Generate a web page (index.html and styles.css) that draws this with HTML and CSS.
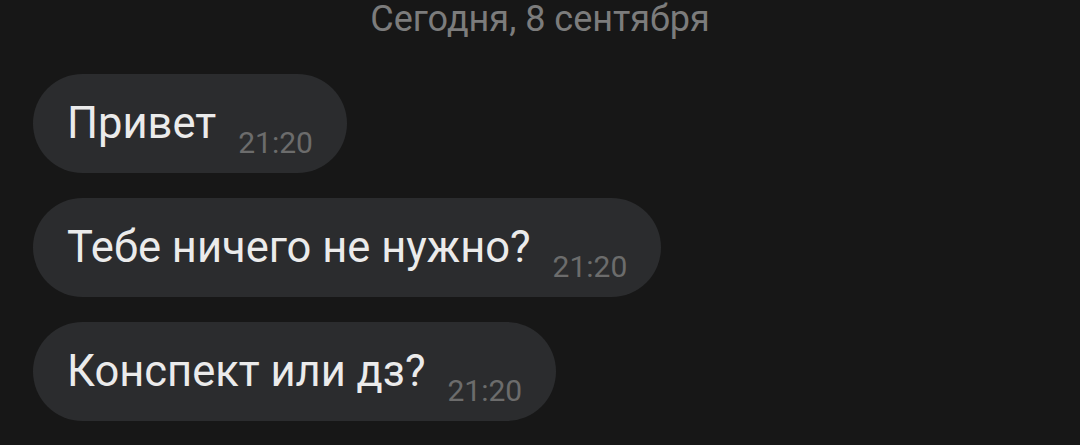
FILE: index.html
```html
<!DOCTYPE html>
<html lang="ru">
<head>
  <meta charset="UTF-8">
  <meta name="viewport" content="width=device-width, initial-scale=1.0">
  <title>Чат</title>
  <link rel="stylesheet" href="styles.css">
</head>
<body>
  <div class="chat">
    <div class="date">Сегодня, 8 сентября</div>

    <div class="messages">
      <div class="bubble">
        <span class="text">Привет</span>
        <span class="time">21:20</span>
      </div>
      <div class="bubble">
        <span class="text">Тебе ничего не нужно?</span>
        <span class="time">21:20</span>
      </div>
      <div class="bubble">
        <span class="text">Конспект или дз?</span>
        <span class="time">21:20</span>
      </div>
    </div>
  </div>
</body>
</html>
```

FILE: styles.css
```css
body {
    margin: 0;
    padding: 0;
    background-color: #171717;
    font-family: Roboto, "Liberation Sans", sans-serif;
}

.chat {
    padding: 0 0 0 33px;
}

.date {
    text-align: center;
    margin-left: -33px;
    font-size: 36px;
    line-height: 38px;
    color: #7c7c7c;
    margin-bottom: 36px;
}

.messages {
    display: flex;
    flex-direction: column;
    align-items: flex-start;
    gap: 25px;
}

.bubble {
    display: flex;
    align-items: flex-start;
    gap: 22px;
    padding: 24px 34px 13px 34px;
    background-color: #2b2c2e;
    border-radius: 50px;
}

.text {
    font-size: 43.5px;
    line-height: 52px;
    color: #ebebeb;
}

.time {
    font-size: 30px;
    line-height: 35px;
    margin-top: 27px;
    color: #6c6c6c;
}
```
